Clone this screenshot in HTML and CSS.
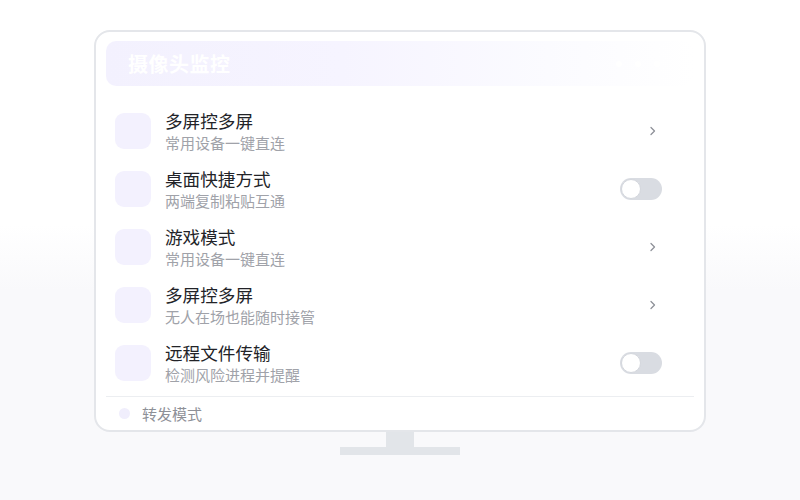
FILE: index.html
```html
<!DOCTYPE html>
<html lang="zh">
<head>
<meta charset="utf-8">
<link rel="stylesheet" href="styles.css">
</head>
<body>
<div class="stage">
  <div class="monitor">
    <div class="header">
      <span class="header-title">摄像头监控</span>
      <span class="dots"><i></i><i></i><i></i></span>
    </div>
    <div class="list">
      <div class="row">
        <div class="icon"></div>
        <div class="text"><div class="title">多屏控多屏</div><div class="sub">常用设备一键直连</div></div>
        <div class="trail"><svg class="chev" width="8" height="12" viewBox="0 0 8 12"><path d="M2 2.5 L5.5 6 L2 9.5" fill="none" stroke="#8e9199" stroke-width="1.3" stroke-linecap="round" stroke-linejoin="round"/></svg></div>
      </div>
      <div class="row">
        <div class="icon"></div>
        <div class="text"><div class="title">桌面快捷方式</div><div class="sub">两端复制粘贴互通</div></div>
        <div class="trail"><span class="toggle"><span class="knob"></span></span></div>
      </div>
      <div class="row">
        <div class="icon"></div>
        <div class="text"><div class="title">游戏模式</div><div class="sub">常用设备一键直连</div></div>
        <div class="trail"><svg class="chev" width="8" height="12" viewBox="0 0 8 12"><path d="M2 2.5 L5.5 6 L2 9.5" fill="none" stroke="#8e9199" stroke-width="1.3" stroke-linecap="round" stroke-linejoin="round"/></svg></div>
      </div>
      <div class="row">
        <div class="icon"></div>
        <div class="text"><div class="title">多屏控多屏</div><div class="sub">无人在场也能随时接管</div></div>
        <div class="trail"><svg class="chev" width="8" height="12" viewBox="0 0 8 12"><path d="M2 2.5 L5.5 6 L2 9.5" fill="none" stroke="#8e9199" stroke-width="1.3" stroke-linecap="round" stroke-linejoin="round"/></svg></div>
      </div>
      <div class="row">
        <div class="icon"></div>
        <div class="text"><div class="title">远程文件传输</div><div class="sub">检测风险进程并提醒</div></div>
        <div class="trail"><span class="toggle"><span class="knob"></span></span></div>
      </div>
    </div>
    <div class="footer">
      <span class="fdot"></span>
      <span class="ftext">转发模式</span>
    </div>
  </div>
  <div class="neck"></div>
  <div class="base"></div>
</div>
</body>
</html>
```

FILE: styles.css
```css
* { box-sizing: border-box; }
html, body { margin: 0; padding: 0; }
body {
  width: 800px;
  height: 500px;
  overflow: hidden;
  background: linear-gradient(to bottom, #ffffff 0%, #ffffff 45%, #f9f9fb 58%, #f9f9fb 100%);
  font-family: "Noto Sans CJK SC", "Noto Sans", sans-serif;
}
.stage {
  display: flex;
  flex-direction: column;
  align-items: center;
  padding-top: 30px;
}
.monitor {
  width: 612px;
  height: 402px;
  border: 2px solid #e4e6ea;
  border-radius: 16px;
  background: #ffffff;
  padding: 9px 10px 0 10px;
  display: flex;
  flex-direction: column;
}
.header {
  height: 45px;
  border-radius: 10px;
  background: linear-gradient(to right, #f3f1fe 0%, #f6f4ff 40%, #fbfbff 75%, rgba(255,255,255,0) 100%);
  display: flex;
  align-items: center;
  justify-content: space-between;
  padding: 0 20px 0 22px;
}
.header-title {
  color: #ffffff;
  font-size: 20px;
  font-weight: 700;
  letter-spacing: 0.5px;
}
.dots { display: flex; gap: 13px; margin-right: 14px; }
.dots i {
  display: block;
  width: 6px;
  height: 6px;
  border-radius: 50%;
  background: rgba(255,255,255,0.9);
}
.list {
  display: flex;
  flex-direction: column;
  padding-top: 16px;
}
.row {
  height: 58px;
  display: flex;
  align-items: center;
  padding: 0 32px 0 9px;
}
.icon {
  width: 36px;
  height: 36px;
  border-radius: 9px;
  background: #f3f1fe;
  flex: none;
}
.text {
  flex: 1;
  margin-left: 14px;
  margin-top: 2px;
  display: flex;
  flex-direction: column;
}
.title {
  font-size: 17.6px;
  line-height: 22px;
  color: #222328;
}
.sub {
  font-size: 15px;
  line-height: 22px;
  color: #a0a2a9;
}
.trail {
  width: 42px;
  display: flex;
  justify-content: flex-end;
  align-items: center;
}
.chev { margin-right: 5px; }
.toggle {
  width: 42px;
  height: 22px;
  border-radius: 11px;
  background: #d9dce2;
  position: relative;
  display: block;
}
.knob {
  position: absolute;
  left: 1px;
  top: 1px;
  width: 20px;
  height: 20px;
  border-radius: 50%;
  background: #ffffff;
  border: 1px solid #d4d7dd;
}
.footer {
  margin-top: 4px;
  border-top: 1px solid #eceef1;
  height: 33px;
  display: flex;
  align-items: center;
  padding-left: 13px;
}
.fdot {
  width: 11px;
  height: 11px;
  border-radius: 50%;
  background: #f0eefc;
}
.ftext {
  margin-left: 12px;
  font-size: 15px;
  color: #8e9097;
}
.neck {
  width: 28px;
  height: 15px;
  background: #e2e5e9;
}
.base {
  width: 120px;
  height: 8px;
  background: #e2e5e9;
}
```
